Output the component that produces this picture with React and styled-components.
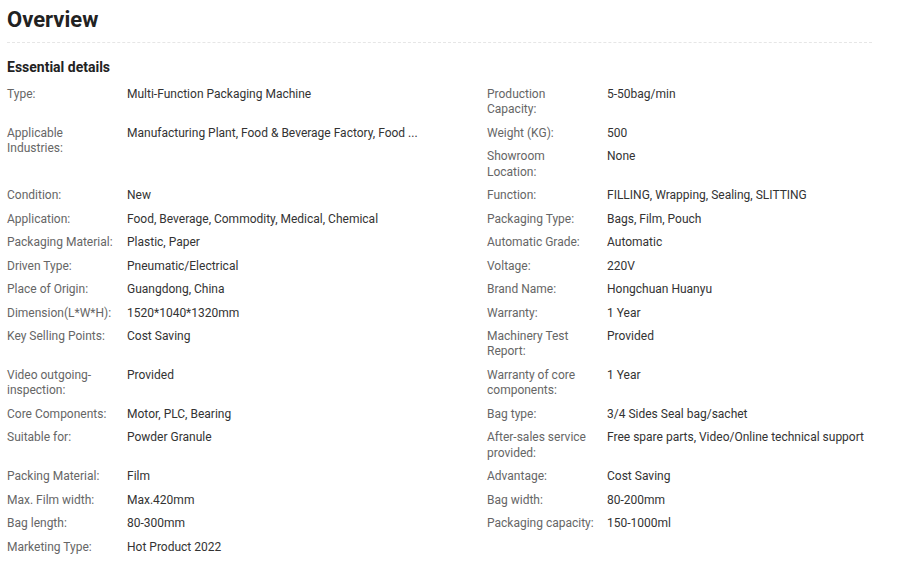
import React from "react";
import styled, { createGlobalStyle } from "styled-components";

const Global = createGlobalStyle`
  html, body { margin: 0; padding: 0; background: #fff; }
  body { font-family: Roboto, "Liberation Sans", Arial, sans-serif; color: #333; }
`;

const Page = styled.div`
  padding: 5px 7px 0;
  width: 865px;
`;

const Title = styled.h2`
  margin: 0;
  font-size: 22px;
  font-weight: 700;
  line-height: 30px;
  color: #222;
  padding-bottom: 7px;
  border-bottom: 1px dashed #e6e6e6;
`;

const SubTitle = styled.h3`
  margin: 15px 0 7px;
  font-size: 14px;
  font-weight: 700;
  line-height: 18px;
  color: #222;
`;

const Grid = styled.div`
  display: grid;
  grid-template-columns: 480px 1fr;
`;

const Cell = styled.div`
  display: flex;
  flex-direction: column;
`;

const Item = styled.div`
  display: flex;
  padding: 4px 0;
  font-size: 12px;
  line-height: 15.45px;
`;

const Label = styled.div`
  width: 110px;
  margin-right: 10px;
  flex-shrink: 0;
  color: #666;
`;

const Value = styled.div`
  color: #333;
  flex: 1;
`;

const rows = [
  [[["Type:", "Multi-Function Packaging Machine"]], [["Production Capacity:", "5-50bag/min"]]],
  [
    [["Applicable Industries:", "Manufacturing Plant, Food & Beverage Factory, Food ..."]],
    [["Weight (KG):", "500"], ["Showroom Location:", "None"]],
  ],
  [[["Condition:", "New"]], [["Function:", "FILLING, Wrapping, Sealing, SLITTING"]]],
  [[["Application:", "Food, Beverage, Commodity, Medical, Chemical"]], [["Packaging Type:", "Bags, Film, Pouch"]]],
  [[["Packaging Material:", "Plastic, Paper"]], [["Automatic Grade:", "Automatic"]]],
  [[["Driven Type:", "Pneumatic/Electrical"]], [["Voltage:", "220V"]]],
  [[["Place of Origin:", "Guangdong, China"]], [["Brand Name:", "Hongchuan Huanyu"]]],
  [[["Dimension(L*W*H):", "1520*1040*1320mm"]], [["Warranty:", "1 Year"]]],
  [[["Key Selling Points:", "Cost Saving"]], [["Machinery Test Report:", "Provided"]]],
  [[["Video outgoing-inspection:", "Provided"]], [["Warranty of core components:", "1 Year"]]],
  [[["Core Components:", "Motor, PLC, Bearing"]], [["Bag type:", "3/4 Sides Seal bag/sachet"]]],
  [[["Suitable for:", "Powder Granule"]], [["After-sales service provided:", "Free spare parts, Video/Online technical support"]]],
  [[["Packing Material:", "Film"]], [["Advantage:", "Cost Saving"]]],
  [[["Max. Film width:", "Max.420mm"]], [["Bag width:", "80-200mm"]]],
  [[["Bag length:", "80-300mm"]], [["Packaging capacity:", "150-1000ml"]]],
  [[["Marketing Type:", "Hot Product 2022"]], []],
];

export default function App() {
  return (
    <>
      <Global />
      <Page>
        <Title>Overview</Title>
        <SubTitle>Essential details</SubTitle>
        <Grid>
          {rows.map((row, i) =>
            row.map((cell, j) => (
              <Cell key={`${i}-${j}`}>
                {cell.map(([l, v]) => (
                  <Item key={l}>
                    <Label>{l}</Label>
                    <Value>{v}</Value>
                  </Item>
                ))}
              </Cell>
            ))
          )}
        </Grid>
      </Page>
    </>
  );
}
